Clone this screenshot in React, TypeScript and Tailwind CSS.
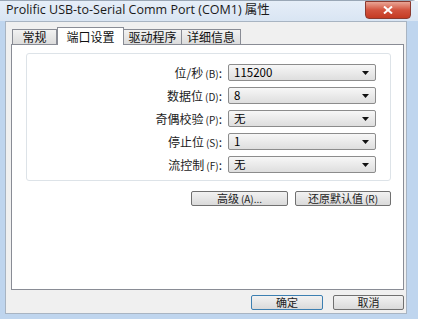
import React from "react";

const cjk = { fontFamily: '"Noto Sans CJK SC", "Noto Sans", sans-serif' };

function Combo({ value }: { value: string }) {
  return (
    <div className="w-[148px] h-[17px] rounded-[2px] border border-[#8c8c8c] bg-gradient-to-b from-[#f7f7f7] to-[#dedede] flex items-center pl-[5px] pr-[6px] text-[11.5px] text-black leading-none">
      <span className="flex-1">{value}</span>
      <svg width="7" height="4" viewBox="0 0 7 4">
        <path d="M0 0 H7 L3.5 4 Z" fill="#111" />
      </svg>
    </div>
  );
}

function Row({ label, key2, value }: { label: string; key2: string; value: string }) {
  return (
    <div className="flex items-center h-[17px]">
      <div className="w-[201px] text-right text-[12px] text-[#222] pr-[6px] leading-none whitespace-nowrap">
        {label}
        <span className="text-[10px] ml-[2px]">({key2})</span>:
      </div>
      <Combo value={value} />
    </div>
  );
}

function Btn({ children, w, def }: { children: React.ReactNode; w: string; def?: boolean }) {
  return (
    <div
      className={`${w} h-[15px] rounded-[2px] border ${def ? "border-[#3c7fb1]" : "border-[#707070]"} bg-gradient-to-b from-[#f2f2f2] to-[#dadada] flex items-center justify-center text-[11px] text-[#222] leading-none`}
    >
      {children}
    </div>
  );
}

export default function App() {
  return (
    <div className="w-[422px] h-[319px] bg-white overflow-hidden" style={cjk}>
      <div className="w-[418px] h-[319px] bg-[#bfd5ee] flex flex-col border-t border-[#9aa7b6] rounded-tr-[6px]">
        <div className="h-[20px] bg-gradient-to-b from-[#e6eef8] to-[#d9e5f3] flex items-start">
          <div className="flex-1 pl-[6px] pt-[3px] text-[12.5px] text-[#1a1a1a] leading-none whitespace-nowrap" style={{ fontFamily: '"Open Sans", "Noto Sans CJK SC", sans-serif' }}>
            Prolific USB-to-Serial Comm Port (COM1) 属性
          </div>
          <div className="mr-[7px] w-[46px] h-[18px] rounded-b-[4px] border border-[#8b3a2f] bg-gradient-to-b from-[#e8a596] via-[#d2533e] to-[#c43a22] flex items-center justify-center">
            <svg width="10" height="8" viewBox="0 0 10 8">
              <path d="M1 0.5 L9 7.5 M9 0.5 L1 7.5" stroke="#fff" strokeWidth="2" />
            </svg>
          </div>
        </div>
        <div className="flex-1 ml-[5px] mr-[11px] mb-[5px] bg-[#f0f0f0] border border-[#a8b4c2] flex flex-col">
          <div className="flex items-end pl-[6px] h-[22px]">
            <div className="w-[45px] h-[15px] border border-b-0 border-[#898c95] bg-gradient-to-b from-[#f2f2f2] to-[#dcdcdc] text-[12px] flex items-center justify-center leading-none text-[#111]">常规</div>
            <div className="w-[67px] h-[18px] -mb-[1px] relative z-10 border border-b-0 border-[#898c95] bg-white text-[12px] flex items-center justify-center leading-none text-[#111]">端口设置</div>
            <div className="w-[58px] h-[15px] border border-b-0 border-l-0 border-[#898c95] bg-gradient-to-b from-[#f2f2f2] to-[#dcdcdc] text-[12px] flex items-center justify-center leading-none text-[#111]">驱动程序</div>
            <div className="w-[59px] h-[15px] border border-b-0 border-l-0 border-[#898c95] bg-gradient-to-b from-[#f2f2f2] to-[#dcdcdc] text-[12px] flex items-center justify-center leading-none text-[#111]">详细信息</div>
          </div>
          <div className="ml-[5px] w-[393px] h-[246px] bg-white border border-[#898c95] pt-[8px] pl-[14px]">
            <div className="w-[365px] h-[128px] rounded-[3px] border border-[#dde3e8] pt-[10px] flex flex-col gap-[6px]">
              <Row label="位/秒" key2="B" value="115200" />
              <Row label="数据位" key2="D" value="8" />
              <Row label="奇偶校验" key2="P" value="无" />
              <Row label="停止位" key2="S" value="1" />
              <Row label="流控制" key2="F" value="无" />
            </div>
            <div className="w-[365px] flex justify-end gap-[7px] mt-[10px]">
              <Btn w="w-[97px]">
                高级<span className="text-[10px] ml-[2px]">(A)...</span>
              </Btn>
              <Btn w="w-[96px]">
                还原默认值<span className="text-[10px] ml-[2px]">(R)</span>
              </Btn>
            </div>
          </div>
          <div className="flex justify-end gap-[10px] pr-[2px] pt-[5px]">
            <Btn w="w-[72px]" def>确定</Btn>
            <Btn w="w-[71px]">取消</Btn>
          </div>
        </div>
      </div>
    </div>
  );
}
